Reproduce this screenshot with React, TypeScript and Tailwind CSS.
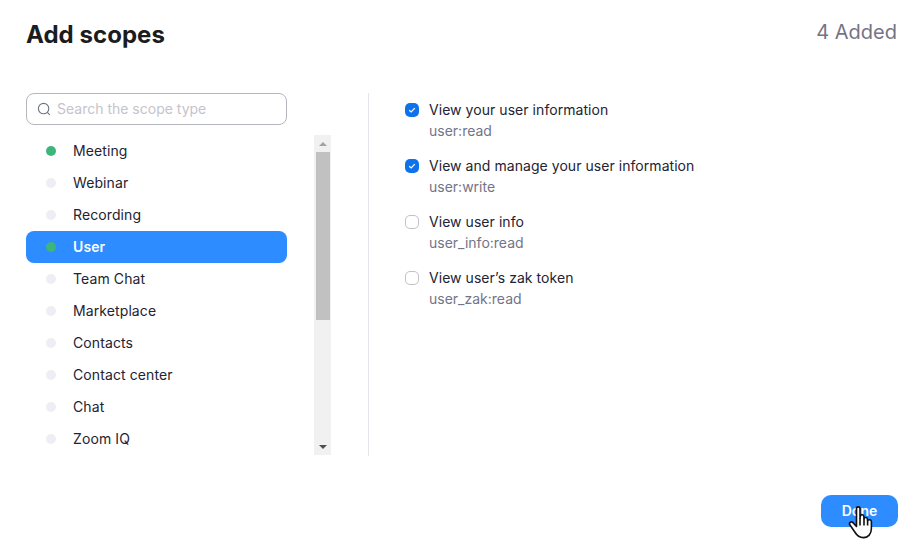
const cats: [string, boolean][] = [
  ["Meeting", true],
  ["Webinar", false],
  ["Recording", false],
  ["User", true],
  ["Team Chat", false],
  ["Marketplace", false],
  ["Contacts", false],
  ["Contact center", false],
  ["Chat", false],
  ["Zoom IQ", false],
];

const scopes: [string, string, boolean][] = [
  ["View your user information", "user:read", true],
  ["View and manage your user information", "user:write", true],
  ["View user info", "user_info:read", false],
  ["View user’s zak token", "user_zak:read", false],
];

export default function App() {
  return (
    <div className="w-[910px] h-[540px] bg-white overflow-hidden flex flex-col font-['Inter',sans-serif] text-[#232333] relative">
      <div className="flex justify-between items-start pl-[26px] pr-[13px] pt-[19px] h-[93px]">
        <h1 className="text-[24px] leading-[32px] font-bold text-[#1a1c20] tracking-[0.05px]">Add scopes</h1>
        <span className="text-[20px] leading-[26px] text-[#747487]">4 Added</span>
      </div>
      <div className="flex h-[363px] pl-[26px]">
        <div className="w-[305px] flex flex-col shrink-0">
          <div className="w-[261px] h-[32px] border border-[#b5b5bd] rounded-[8px] flex items-center pl-[10px] gap-[6px] mb-[10px]">
            <svg width="14" height="14" viewBox="0 0 14 14" fill="none" stroke="#6e7680" strokeWidth="1.1">
              <circle cx="6.6" cy="6.6" r="5.2" />
              <path d="M10.4 10.4 L12.8 12.8" />
            </svg>
            <span className="text-[14px] leading-[20px] text-[#c4c4cc]">Search the scope type</span>
          </div>
          <div className="flex">
            <div className="w-[261px] flex flex-col">
              {cats.map(([name, on]) => {
                const sel = name === "User";
                return (
                  <div
                    key={name}
                    className={`h-[32px] flex items-center pl-[20px] rounded-[8px] text-[14px] leading-[20px] tracking-[0.1px] ${sel ? "bg-[#2d8cff] text-white font-semibold" : "text-[#232333]"}`}
                  >
                    <span className={`w-[10px] h-[10px] rounded-full mr-[17px] ${on ? "bg-[#3eb57c]" : "bg-[#ededf4]"}`} />
                    {name}
                  </div>
                );
              })}
            </div>
            <div className="ml-[27px] w-[17px] h-[320px] bg-[#f1f1f1] flex flex-col items-center">
              <div className="h-[17px] flex items-center justify-center">
                <span className="w-0 h-0 border-x-[4px] border-x-transparent border-b-[4px] border-b-[#a3a3a3]" />
              </div>
              <div className="w-[14px] h-[168px] bg-[#c1c1c1]" />
              <div className="flex-1" />
              <div className="h-[17px] flex items-center justify-center">
                <span className="w-0 h-0 border-x-[4px] border-x-transparent border-t-[4px] border-t-[#505050]" />
              </div>
            </div>
          </div>
        </div>
        <div className="ml-[37px] w-px bg-[#e4e4ed]" />
        <div className="pl-[36px] flex flex-col pt-[7px]">
          {scopes.map(([title, code, on]) => (
            <div key={code} className="h-[56px] flex items-start">
              <div className="h-[20px] flex items-center mr-[10px]">
                {on ? (
                  <span className="w-[14px] h-[14px] rounded-[5px] bg-[#0e72ed] flex items-center justify-center">
                    <svg width="10" height="10" viewBox="0 0 10 10" fill="none" stroke="#fff" strokeWidth="1.2">
                      <path d="M2.2 5.2 L4.2 7 L7.8 3.1" />
                    </svg>
                  </span>
                ) : (
                  <span className="w-[14px] h-[14px] rounded-[5px] border border-[#c1c1c9] bg-white" />
                )}
              </div>
              <div className="flex flex-col">
                <span className="text-[14px] leading-[20px] tracking-[0.05px] text-[#232333]">{title}</span>
                <span className="text-[14px] leading-[20px] mt-[1px] text-[#747487]">{code}</span>
              </div>
            </div>
          ))}
        </div>
      </div>
      <div className="flex justify-end pr-[12px] pt-[39px]">
        <button className="w-[77px] h-[32px] rounded-[10px] bg-[#2d8cff] text-white text-[14px] leading-[20px] font-semibold">Done</button>
      </div>
      <svg className="absolute left-[848px] top-[505px]" width="27" height="34" viewBox="0 0 27 34" fill="#fff" stroke="#111" strokeWidth="1.6" strokeLinejoin="round">
        <path d="M8.5 3.5 C8.5 1.3 12 1.3 12 3.5 L12 13 L12.4 11 C12.7 9.2 15.6 9.2 15.8 11.2 L16 13.7 C16.4 12 19.2 12 19.4 14 L19.6 15.7 C20.2 14.2 23.4 14.6 23.4 16.6 L23.4 23.5 C23.4 29 20.2 32.6 15.5 32.6 C10.8 32.6 8.8 30.4 6.8 27 L1.8 19.8 C0.6 17.8 3.4 15.8 5 17.6 L8.5 21.5 Z" />
        <path d="M12 13 L12 20.5 M16 13.7 L16 20.5 M19.6 15.7 L19.6 20.5" fill="none" />
      </svg>
    </div>
  );
}
